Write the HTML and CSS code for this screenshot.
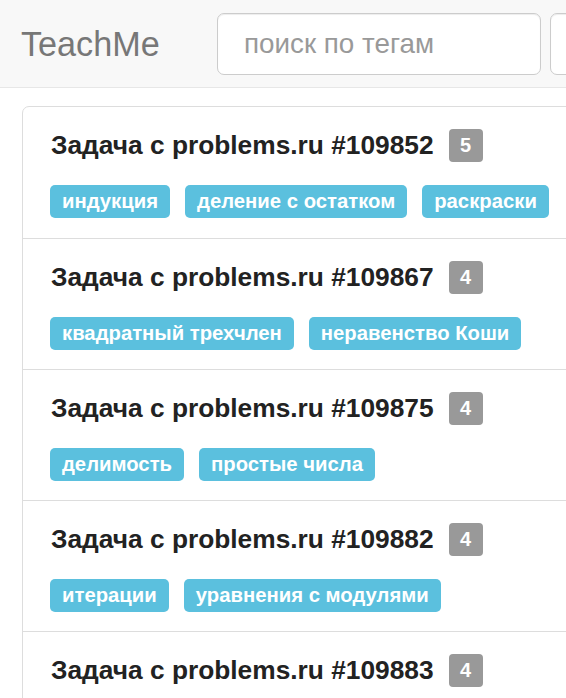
FILE: index.html
```html
<!DOCTYPE html>
<html lang="ru">
<head>
<meta charset="utf-8">
<title>TeachMe</title>
<link rel="stylesheet" href="styles.css">
</head>
<body>
<nav class="navbar">
  <a class="brand" href="#">TeachMe</a>
  <form class="search">
    <input class="search-input" type="text" placeholder="поиск по тегам">
    <input class="search-extra" type="text">
  </form>
</nav>
<main class="content">
  <div class="list-group">
    <div class="item">
      <div class="title-row"><h4 class="title">Задача с problems.ru #109852</h4><span class="badge">5</span></div>
      <div class="tags"><span class="tag">индукция</span><span class="tag">деление с остатком</span><span class="tag">раскраски</span></div>
    </div>
    <div class="item">
      <div class="title-row"><h4 class="title">Задача с problems.ru #109867</h4><span class="badge">4</span></div>
      <div class="tags"><span class="tag">квадратный трехчлен</span><span class="tag">неравенство Коши</span></div>
    </div>
    <div class="item">
      <div class="title-row"><h4 class="title">Задача с problems.ru #109875</h4><span class="badge">4</span></div>
      <div class="tags"><span class="tag">делимость</span><span class="tag">простые числа</span></div>
    </div>
    <div class="item">
      <div class="title-row"><h4 class="title">Задача с problems.ru #109882</h4><span class="badge">4</span></div>
      <div class="tags"><span class="tag">итерации</span><span class="tag">уравнения с модулями</span></div>
    </div>
    <div class="item">
      <div class="title-row"><h4 class="title">Задача с problems.ru #109883</h4><span class="badge">4</span></div>
    </div>
  </div>
</main>
</body>
</html>
```
FILE: styles.css
```css
html, body {
  margin: 0;
  padding: 0;
  overflow: hidden;
  background: #fff;
  font-family: "Liberation Sans", Arial, sans-serif;
}
.navbar {
  display: flex;
  align-items: center;
  height: 87px;
  background: #f8f8f8;
  border-bottom: 1.5px solid #e7e7e7;
  padding-left: 21px;
  width: 900px;
  box-sizing: content-box;
}
.brand {
  font-size: 34.2px;
  color: #777;
  text-decoration: none;
  width: 196px;
  line-height: 40px;
}
.search {
  display: flex;
  gap: 9px;
  margin: 0;
}
.search-input, .search-extra {
  box-sizing: border-box;
  height: 62px;
  border: 1.5px solid #ccc;
  border-radius: 7px;
  background: #fff;
  font-family: "Liberation Sans", Arial, sans-serif;
  font-size: 27.8px;
  padding: 0 26px;
  color: #555;
  box-shadow: inset 0 1px 1px rgba(0,0,0,0.075);
  outline: none;
}
.search-input { width: 324px; }
.search-extra { width: 200px; }
.search-input::placeholder { color: #999; }
.content {
  padding: 18px 0 0 22px;
}
.list-group {
  width: 800px;
  border: 1.5px solid #ddd;
  border-radius: 7px;
  background: #fff;
}
.item {
  height: 131px;
  box-sizing: border-box;
  padding: 23px 28px 0;
  border-top: 1.5px solid #ddd;
}
.item:first-child { border-top: none; }
.title-row {
  display: flex;
  align-items: center;
  gap: 15px;
  height: 30px;
}
.title {
  margin: 0;
  font-size: 26.3px;
  line-height: 30px;
  font-weight: bold;
  color: #222;
}
.badge {
  display: inline-block;
  min-width: 34px;
  height: 33px;
  box-sizing: border-box;
  padding: 0 10px;
  background: #999;
  color: #fff;
  font-weight: bold;
  font-size: 20px;
  line-height: 33px;
  text-align: center;
  border-radius: 4px;
}
.tags {
  display: flex;
  gap: 15px;
  margin-top: 25px;
  margin-left: -1px;
}
.tag {
  display: inline-block;
  height: 33px;
  line-height: 33px;
  padding: 0 12px;
  background: #5bc0de;
  color: #fff;
  font-weight: bold;
  font-size: 20.3px;
  border-radius: 5px;
  white-space: nowrap;
}
```
